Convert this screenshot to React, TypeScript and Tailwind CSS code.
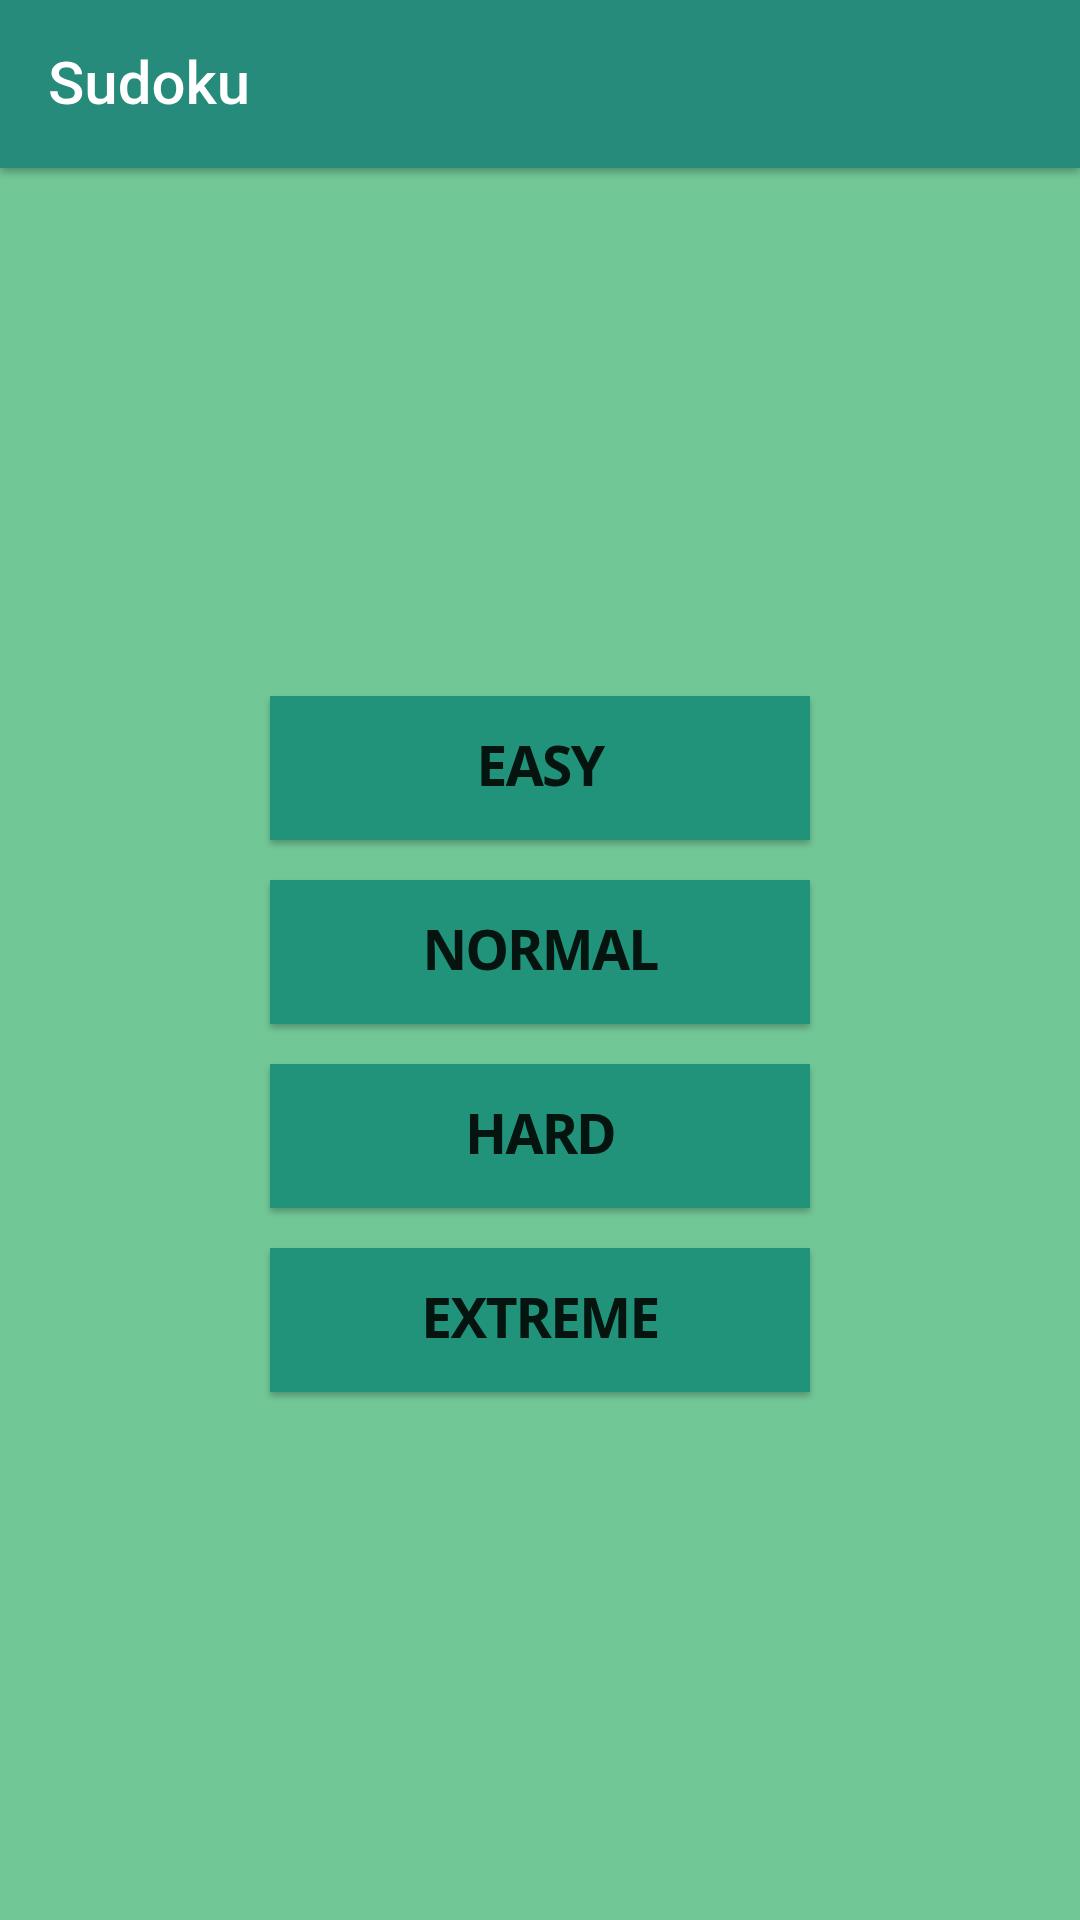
const levels = ['EASY', 'NORMAL', 'HARD', 'EXTREME'];

export default function App() {
  return (
    <div className="flex h-[1920px] w-[1080px] flex-col bg-[#72c797]">
      <header className="relative z-10 flex h-[168px] shrink-0 items-center bg-[#268b7a] px-[48px] shadow-[0_4px_8px_rgba(0,0,0,0.28)]">
        <h1 className="font-['Roboto',sans-serif] text-[60px] font-medium leading-none text-white">
          Sudoku
        </h1>
      </header>
      <main className="flex flex-1 flex-col items-center justify-center gap-[40px]">
        {levels.map((level) => (
          <button
            key={level}
            className="flex h-[144px] w-[540px] items-center justify-center bg-[#20937a] pb-[8px] font-['Noto_Sans',sans-serif] text-[55px] font-bold leading-none tracking-[-0.03em] text-[#061410] shadow-[0_4px_6px_rgba(0,0,0,0.25)]"
          >
            {level}
          </button>
        ))}
      </main>
    </div>
  );
}
